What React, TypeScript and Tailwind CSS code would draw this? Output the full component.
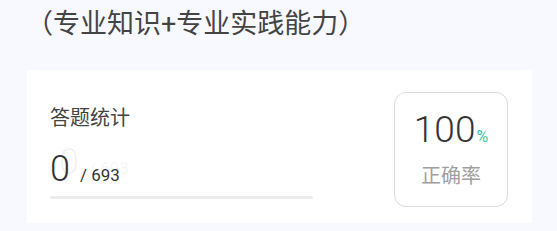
export default function App() {
  return (
    <div
      className="w-[557px] h-[231px] bg-[#f7f9fe] overflow-hidden"
      style={{ fontFamily: "Roboto, 'Noto Sans CJK SC', sans-serif" }}
    >
      <div className="pl-[26px] pt-[5px] h-[70px] text-[27px] leading-[38px] text-[#444]">
        （专业知识+专业实践能力）
      </div>
      <div className="ml-[27px] w-[505px] h-[153px] bg-white flex items-start justify-between pl-[23px] pr-[24px]">
        <div className="pt-[35px] w-[263px]">
          <div className="text-[20px] leading-[26px] text-[#444]">答题统计</div>
          <div className="relative mt-[18px] flex items-baseline h-[40px]">
            <div className="absolute left-[9px] top-[-7px] flex items-baseline text-[#000]/[0.06]">
              <span className="text-[36px] leading-[40px] font-light">0</span>
              <span className="ml-[10px] text-[17px]">/ 693</span>
            </div>
            <span className="relative text-[36px] leading-[40px] font-light text-[#333]">0</span>
            <span className="relative ml-[10px] text-[17px] text-[#333]">/ 693</span>
          </div>
          <div className="mt-[7px] h-[3px] w-[263px] bg-[#ececec] rounded-full" />
        </div>
        <div className="mt-[22px] w-[114px] h-[115px] border border-[#dcdcdc] rounded-[12px] flex flex-col items-center pt-[17px]">
          <div className="flex items-baseline text-[#333]">
            <span className="text-[37px] leading-[40px] font-light">100</span>
            <span className="text-[16px] text-[#3fc4a7] ml-[1px]">%</span>
          </div>
          <div className="mt-[14px] text-[20px] leading-[24px] text-[#a0a0a0]">正确率</div>
        </div>
      </div>
    </div>
  );
}
